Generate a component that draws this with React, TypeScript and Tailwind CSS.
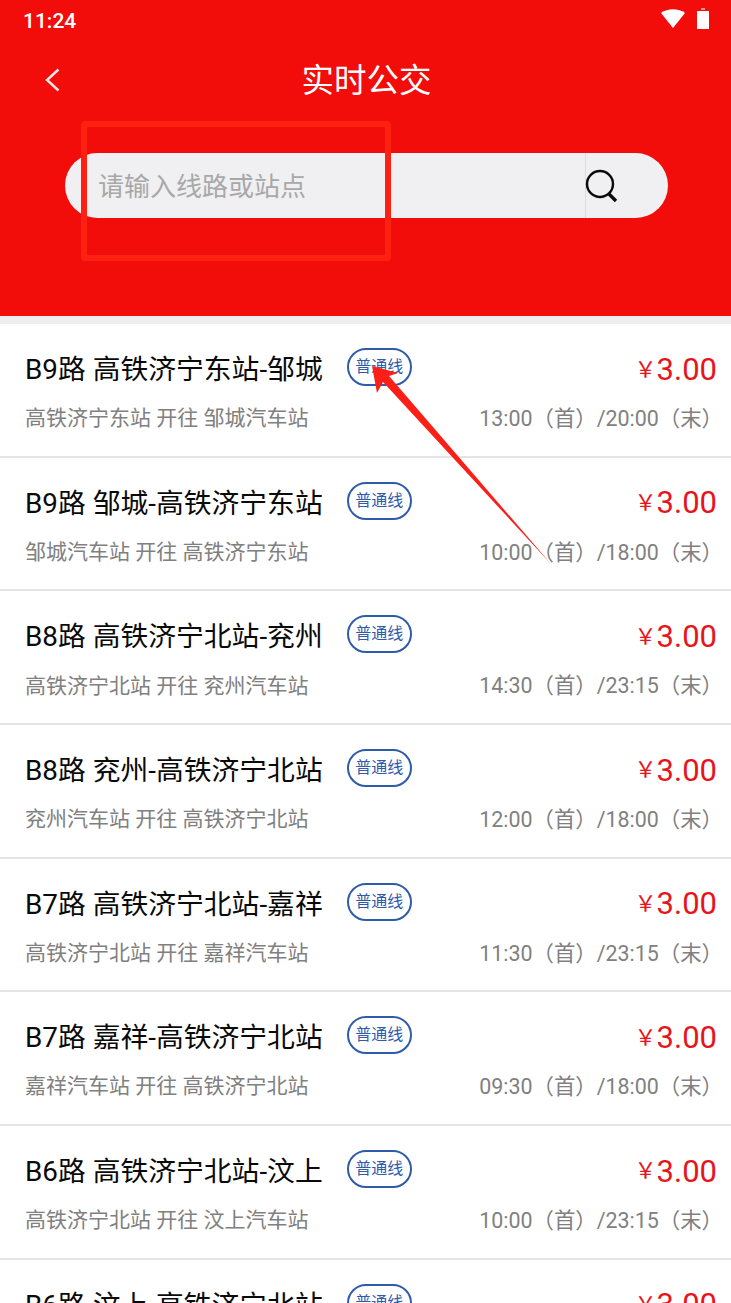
const routes = [
  { title: "B9路 高铁济宁东站-邹城", sub: "高铁济宁东站 开往 邹城汽车站", time: "13:00（首）/20:00（末）" },
  { title: "B9路 邹城-高铁济宁东站", sub: "邹城汽车站 开往 高铁济宁东站", time: "10:00（首）/18:00（末）" },
  { title: "B8路 高铁济宁北站-兖州", sub: "高铁济宁北站 开往 兖州汽车站", time: "14:30（首）/23:15（末）" },
  { title: "B8路 兖州-高铁济宁北站", sub: "兖州汽车站 开往 高铁济宁北站", time: "12:00（首）/18:00（末）" },
  { title: "B7路 高铁济宁北站-嘉祥", sub: "高铁济宁北站 开往 嘉祥汽车站", time: "11:30（首）/23:15（末）" },
  { title: "B7路 嘉祥-高铁济宁北站", sub: "嘉祥汽车站 开往 高铁济宁北站", time: "09:30（首）/18:00（末）" },
  { title: "B6路 高铁济宁北站-汶上", sub: "高铁济宁北站 开往 汶上汽车站", time: "10:00（首）/23:15（末）" },
  { title: "B6路 汶上-高铁济宁北站", sub: "汶上汽车站 开往 高铁济宁北站", time: "10:00（首）/18:00（末）" },
];

export default function App() {
  return (
    <div className="relative h-[1303px] w-[731px] overflow-hidden bg-white font-['Roboto','Noto_Sans_CJK_SC',sans-serif]">
      <header className="h-[316px] bg-[#f20c0a] text-white">
        <div className="flex h-[40px] items-center justify-between pl-[23px] pr-[22px]">
          <span className="mt-[4px] text-[21px] font-medium">11:24</span>
          <div className="mb-[3px] flex items-center gap-[12px]">
            <svg width="24" height="19" viewBox="0 0 24 19">
              <path d="M0 4 C6.5 -1 17.5 -1 24 4 L12 19 Z" fill="#fff" />
            </svg>
            <svg width="12" height="21" viewBox="0 0 12 21">
              <path d="M4 0 H8 V2 H4 Z" fill="#fff" fillOpacity="0.55" />
              <path d="M0 3 H12 V21 H0 Z" fill="#fff" />
            </svg>
          </div>
        </div>
        <div className="relative mt-[5px] flex h-[72px] items-center justify-center pl-[2px]">
          <svg className="absolute left-[43px] top-[22px]" width="20" height="26" viewBox="0 0 20 26" fill="none">
            <path d="M15.5 2.5 L4 13 L15.5 23.5" stroke="#fff" strokeWidth="2.4" strokeOpacity="0.9" />
          </svg>
          <span className="text-[32.5px] leading-none">实时公交</span>
        </div>
        <div className="ml-[65px] mr-[63px] mt-[36px] flex h-[65px] items-center rounded-[33px] bg-[#f0f0f2]">
          <span className="mt-[4px] flex-1 pl-[33px] text-[26px] text-[#a8a8a8]">请输入线路或站点</span>
          <div className="flex h-full w-[83px] items-center border-l border-[#dcdcdc]">
            <svg className="-ml-[2px]" width="36" height="36" viewBox="0 0 36 36" fill="none" stroke="#0a0a0a">
              <circle cx="16" cy="16" r="13" strokeWidth="2.4" />
              <path d="M25 26 L32 33" strokeWidth="3.4" />
            </svg>
          </div>
        </div>
      </header>
      <div className="h-[8px] bg-[#eeeeee]" />
      <ul>
        {routes.map((r) => (
          <li key={r.title} className="h-[133.67px] border-b-2 border-[#e4e4e4] pl-[25px] pr-[14px]">
            <div className="flex h-[84px] items-center justify-between pt-[8px]">
              <div className="flex items-center">
                <span className="text-[27.8px] leading-none text-[#0a0a0a]">{r.title}</span>
                <span className="mb-[6px] ml-[24px] flex h-[38px] w-[65px] items-center justify-center rounded-[19px] border-2 border-[#2f5bab] text-[16px] text-[#2f5bab]">
                  普通线
                </span>
              </div>
              <div className="flex items-center text-[#e8141c]">
                <span className="mb-[6px] font-['Noto_Sans_CJK_SC',sans-serif] text-[22px]">￥</span>
                <span className="text-[31px]">3.00</span>
              </div>
            </div>
            <div className="flex items-center justify-between text-[21px] leading-none text-[#808080]">
              <span>{r.sub}</span>
              <span className="-mr-[6px] text-[21.4px]">{r.time}</span>
            </div>
          </li>
        ))}
      </ul>

      {/* annotations drawn over the screenshot */}
      <div className="absolute left-[81px] top-[121px] h-[140px] w-[310px] rounded-[4px] border-[6px] border-[#fe2011]" />
      <svg className="absolute left-0 top-0" width="731" height="1303" viewBox="0 0 731 1303">
        <polygon points="372,366 398,373 389,376 551,564 383,382 377,393" fill="#fb1f17" />
      </svg>
    </div>
  );
}
